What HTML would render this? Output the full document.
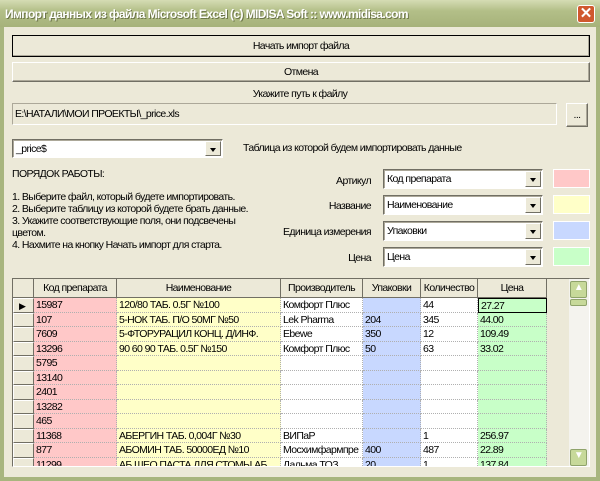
<!DOCTYPE html><html><head><meta charset="utf-8"><style>
*{box-sizing:border-box;margin:0;padding:0}
body{width:600px;height:481px;overflow:hidden;font-family:"Liberation Sans",sans-serif;font-size:10.5px;letter-spacing:-0.6px;color:#000;background:#a8b57e}
.win{position:absolute;left:0;top:0;width:600px;height:481px;background:#a8b57e}
.title{position:absolute;left:0;top:0;width:600px;height:27px;background:linear-gradient(#d5dcb4,#b3bf88 40%,#a6b27a);color:#fff;font-weight:bold;font-size:12px;letter-spacing:-0.6px;padding:7px 0 0 5px;text-shadow:1px 1px #6c7548}
.close{position:absolute;left:577px;top:5px;width:18px;height:18px;background:#d0582e;border:1px solid #fff;border-radius:3px;color:#fff;font-size:15px;line-height:15px;text-align:center;font-weight:bold;letter-spacing:0}
.body{position:absolute;left:4px;top:27px;width:592px;height:450px;background:#ece9d8}
.a{position:absolute;white-space:nowrap}
.btn{position:absolute;background:#ece9d8;border:1px solid;border-color:#fff #716f64 #716f64 #fff;box-shadow:inset -1px -1px #aca899;text-align:center}
.combo{position:absolute;background:#fff;border:1px solid;border-color:#716f64 #fff #fff #716f64;box-shadow:inset 1px 1px #aca899;padding:3px 0 0 3px}
.combo .dd{position:absolute;right:1px;top:1px;bottom:1px;width:16px;background:#ece9d8;border:1px solid;border-color:#fff #716f64 #716f64 #fff}
.combo .dd:after{content:"";position:absolute;left:4px;top:6px;border:3px solid transparent;border-top:4px solid #000;border-bottom:0}
.sw{position:absolute;left:549px;width:37px;height:19px;border:1px solid #fff}
.grid{position:absolute;left:8px;top:251px;width:578px;height:189px;border:1px solid;border-color:#716f64 #fff #fff #716f64;background:#ece9d8;overflow:hidden}
.col{position:absolute;top:0;height:189px}
.hd{position:absolute;top:0;height:19px;border-right:1px solid #716f64;border-bottom:1px solid #716f64;background:#ece9d8;text-align:center;padding-top:3px;white-space:nowrap;overflow:hidden}
.cell{position:absolute;height:14.5px;padding:1px 0 0 2px;white-space:nowrap;overflow:hidden;border-bottom:1px dotted #b0b0b0;border-right:1px dotted #b0b0b0}
</style></head><body><div class="win">
<div class="title">Импорт данных из файла Microsoft Excel (c) MIDISA Soft :: www.midisa.com</div>
<div class="close">✕</div>
<div class="body">
<div class="btn" style="left:8px;top:8px;width:578px;height:22px;border:1px solid #000;padding-top:4px">Начать импорт файла</div>
<div class="btn" style="left:8px;top:35px;width:578px;height:20px;padding-top:3px">Отмена</div>
<div class="a" style="left:0;width:592px;top:61px;text-align:center">Укажите путь к файлу</div>
<div class="a" style="left:8px;top:76px;width:545px;height:22px;border:1px solid;border-color:#aca899 #fff #fff #aca899;padding:4px 0 0 2px">E:\НАТАЛИ\МОИ ПРОЕКТЫ\_price.xls</div>
<div class="btn" style="left:562px;top:76px;width:22px;height:24px;padding-top:5px">...</div>
<div class="combo" style="left:8px;top:112px;width:211px;height:19px">_price$<div class="dd"></div></div>
<div class="a" style="left:239px;top:115px">Таблица из которой будем импортировать данные</div>
<div class="a" style="left:8px;top:141px">ПОРЯДОК РАБОТЫ:</div>
<div class="a" style="left:8px;top:164px;line-height:12px">1. Выберите файл, который будете импортировать.<br>2. Выберите таблицу из которой будете брать данные.<br>3. Укажите соответствующие поля, они подсвечены<br>цветом.<br>4. Нахмите на кнопку Начать импорт для старта.</div>
<div class="a" style="left:250px;width:117px;text-align:right;top:148px">Артикул</div>
<div class="a" style="left:250px;width:117px;text-align:right;top:173px">Название</div>
<div class="a" style="left:250px;width:117px;text-align:right;top:199px">Единица измерения</div>
<div class="a" style="left:250px;width:117px;text-align:right;top:225px">Цена</div>
<div class="combo" style="left:379px;top:142px;width:160px;height:20px">Код препарата<div class="dd"></div></div>
<div class="combo" style="left:379px;top:168px;width:160px;height:20px">Наименование<div class="dd"></div></div>
<div class="combo" style="left:379px;top:194px;width:160px;height:20px">Упаковки<div class="dd"></div></div>
<div class="combo" style="left:379px;top:220px;width:160px;height:20px">Цена<div class="dd"></div></div>
<div class="sw" style="top:142px;background:#ffc8c8"></div>
<div class="sw" style="top:168px;background:#ffffc8"></div>
<div class="sw" style="top:194px;background:#c8d8ff"></div>
<div class="sw" style="top:220px;background:#c8ffc8"></div>
<div class="grid" id="g"></div>
</div></div>
<script>
var g=document.getElementById('g');
var cols=[[0,21,'','#ece9d8'],[21,83,'Код препарата','#ffc8c8'],[104,164,'Наименование','#ffffc8'],[268,82,'Производитель','#fff'],[350,58,'Упаковки','#c8d8ff'],[408,57,'Количество','#fff'],[465,69,'Цена','#c8ffc8']];
var rows=[['15987','120/80 ТАБ. 0.5Г №100','Комфорт Плюс','','44','27.27'],['107','5-НОК ТАБ. П/О 50МГ №50','Lek Pharma','204','345','44.00'],['7609','5-ФТОРУРАЦИЛ КОНЦ. Д/ИНФ.','Ebewe','350','12','109.49'],['13296','90 60 90 ТАБ. 0.5Г №150','Комфорт Плюс','50','63','33.02'],['5795','','','','',''],['13140','','','','',''],['2401','','','','',''],['13282','','','','',''],['465','','','','',''],['11368','АБЕРГИН ТАБ. 0,004Г №30','ВИПаР','','1','256.97'],['877','АБОМИН ТАБ. 50000ЕД №10','Мосхимфармпре','400','487','22.89'],['11299','АБ ШЕО ПАСТА ДЛЯ СТОМЫ АБ','Дальма ТОЗ','20','1','137.84']];
var h='';
cols.forEach(function(c,i){h+='<div class="hd" style="left:'+c[0]+'px;width:'+c[1]+'px">'+c[2]+'</div>';
 if(i>0)h+='<div class="col" style="left:'+c[0]+'px;width:'+c[1]+'px;top:19px;background:'+c[3]+'"></div>';
 rows.forEach(function(r,j){var t=i==0?(j==0?'▶':''):r[i-1];
 var st=i==0?'background:#ece9d8;border:1px solid;border-color:#fff #716f64 #716f64 #fff;font-size:9px;padding:2px 0 0 5px;':'';
 if(i==6&&j==0)st='border:1px solid #000;';
 h+='<div class="cell" style="left:'+c[0]+'px;width:'+c[1]+'px;top:'+(19+j*14.5)+'px;'+st+'">'+t+'</div>';});});
h+='<div class="a" style="left:556px;top:0;width:20px;height:189px;background:#f4f3ee"></div>';
h+='<div class="a" style="left:557px;top:2px;width:17px;height:17px;background:#c7d99a;border:1px solid #8fa36b;border-radius:2px;text-align:center;color:#fff;font-size:10px">▲</div>';
h+='<div class="a" style="left:557px;top:20px;width:17px;height:7px;background:#c7d99a;border:1px solid #8fa36b;border-radius:2px"></div>';
h+='<div class="a" style="left:557px;top:170px;width:17px;height:17px;background:#c7d99a;border:1px solid #8fa36b;border-radius:2px;text-align:center;color:#fff;font-size:10px">▼</div>';
g.innerHTML=h;
</script>
</body></html>
